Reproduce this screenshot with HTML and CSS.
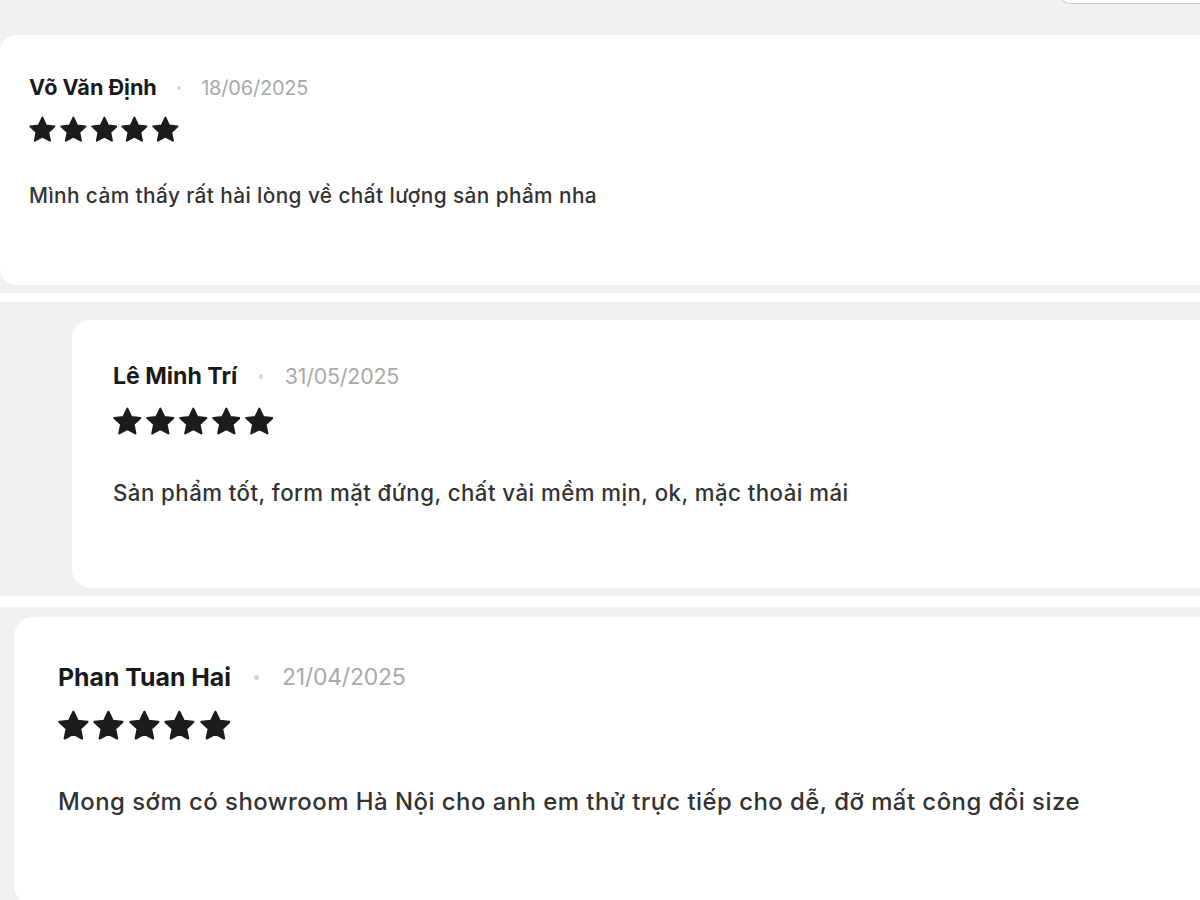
FILE: index.html
```html
<!DOCTYPE html>
<html lang="vi">

<head>
    <meta charset="UTF-8" />
    <meta name="viewport" content="width=device-width, initial-scale=1.0" />
    <title>Đánh giá sản phẩm</title>
    <link rel="stylesheet" href="styles.css">
</head>

<body>

    <svg width="0" height="0" class="defs">
        <symbol id="star" viewBox="1 1.2 22 21">
            <polygon points="12,2 15,8.4 22,9.2 16.8,14 18.2,21 12,17.6 5.8,21 7.2,14 2,9.2 9,8.4"
                fill="currentColor" stroke="currentColor" stroke-width="1.6" stroke-linejoin="round" />
        </symbol>
    </svg>

    <!-- Review 1 -->
    <section class="strip strip-first">
        <div class="toolbar">
            <div class="sort-btn"></div>
        </div>
        <div class="review review-sm">
            <div class="review-head">
                <span class="review-name">Võ Văn Định</span>
                <span class="dot"></span>
                <span class="review-date">18/06/2025</span>
            </div>
            <div class="stars">
                <svg><use href="#star"></use></svg>
                <svg><use href="#star"></use></svg>
                <svg><use href="#star"></use></svg>
                <svg><use href="#star"></use></svg>
                <svg><use href="#star"></use></svg>
            </div>
            <p class="review-text">Mình cảm thấy rất hài lòng về chất lượng sản phẩm nha</p>
        </div>
    </section>

    <!-- Review 2 -->
    <section class="strip strip-second">
        <div class="review review-md">
            <div class="review-head">
                <span class="review-name">Lê Minh Trí</span>
                <span class="dot"></span>
                <span class="review-date">31/05/2025</span>
            </div>
            <div class="stars">
                <svg><use href="#star"></use></svg>
                <svg><use href="#star"></use></svg>
                <svg><use href="#star"></use></svg>
                <svg><use href="#star"></use></svg>
                <svg><use href="#star"></use></svg>
            </div>
            <p class="review-text">Sản phẩm tốt, form mặt đứng, chất vải mềm mịn, ok, mặc thoải mái</p>
        </div>
    </section>

    <!-- Review 3 -->
    <section class="strip strip-third">
        <div class="review review-lg">
            <div class="review-head">
                <span class="review-name">Phan Tuan Hai</span>
                <span class="dot"></span>
                <span class="review-date">21/04/2025</span>
            </div>
            <div class="stars">
                <svg><use href="#star"></use></svg>
                <svg><use href="#star"></use></svg>
                <svg><use href="#star"></use></svg>
                <svg><use href="#star"></use></svg>
                <svg><use href="#star"></use></svg>
            </div>
            <p class="review-text">Mong sớm có showroom Hà Nội cho anh em thử trực tiếp cho dễ, đỡ mất công đổi size</p>
        </div>
    </section>

</body>

</html>
```

FILE: styles.css
```css
* {
    box-sizing: border-box;
}

body {
    margin: 0;
    height: 900px;
    overflow: hidden;
    background: #fff;
    font-family: Inter, 'Noto Sans', sans-serif;
    color: #1e1e1e;
}

.defs {
    position: absolute;
}

.strip {
    background: #f1f1f1;
    overflow: hidden;
}

.strip-first {
    height: 293px;
}

.strip-second {
    height: 294px;
    margin-top: 9px;
    padding-top: 18px;
}

.strip-third {
    height: 293px;
    margin-top: 11px;
    padding-top: 10px;
}

.toolbar {
    height: 4px;
    display: flex;
    justify-content: flex-end;
    align-items: flex-end;
    overflow: hidden;
}

.sort-btn {
    width: 160px;
    height: 40px;
    margin-right: -20px;
    background: #fff;
    border: 1px solid #cdcdcd;
    border-radius: 10px;
    box-shadow: 0 1px 2px rgba(0, 0, 0, 0.08);
    flex-shrink: 0;
}

/* review card, sizes in em so each one scales */
.review {
    background: #fff;
    border-radius: 0.85em;
    padding: 2em 0 0;
    min-height: 12.5em;
    width: calc(100% + 60px);
}

.review-sm {
    font-size: 20px;
    margin-top: 31px;
    padding-left: 29px;
}

.review-md {
    font-size: 21.4px;
    margin-left: 72px;
    padding-left: 41px;
}

.review-lg {
    font-size: 23px;
    margin-left: 14px;
    padding-left: 44px;
}

.review-head {
    display: flex;
    align-items: center;
    line-height: 1.2;
}

.review-name {
    font-size: 1.08em;
    font-weight: 700;
    letter-spacing: 0;
    color: #1a1a1a;
}

.dot {
    width: 0.22em;
    height: 0.22em;
    border-radius: 50%;
    background: #d4d4d4;
    margin: 0 1em;
}

.review-date {
    font-size: 1em;
    color: #a9a9a9;
    letter-spacing: -0.01em;
}

.stars {
    display: flex;
    gap: 0.2em;
    margin-top: 0.76em;
    color: #1c1c1c;
}

.stars svg {
    width: 1.34em;
    height: 1.34em;
}

.review-text {
    margin: 1.85em 0 0;
    font-size: 1.04em;
    font-weight: 500;
    line-height: 1.4;
    color: #333;
    letter-spacing: 0.02em;
}
```
